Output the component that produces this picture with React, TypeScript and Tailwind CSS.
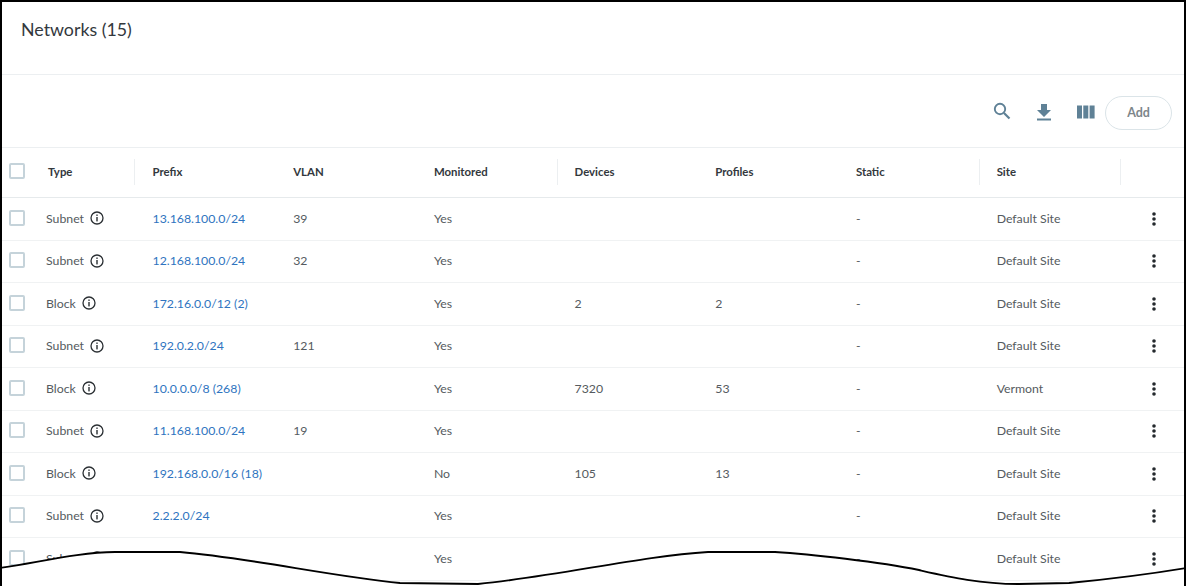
const rows = [
  ["Subnet", "13.168.100.0/24", "39", "Yes", "", "", "-", "Default Site"],
  ["Subnet", "12.168.100.0/24", "32", "Yes", "", "", "-", "Default Site"],
  ["Block", "172.16.0.0/12 (2)", "", "Yes", "2", "2", "-", "Default Site"],
  ["Subnet", "192.0.2.0/24", "121", "Yes", "", "", "-", "Default Site"],
  ["Block", "10.0.0.0/8 (268)", "", "Yes", "7320", "53", "-", "Vermont"],
  ["Subnet", "11.168.100.0/24", "19", "Yes", "", "", "-", "Default Site"],
  ["Block", "192.168.0.0/16 (18)", "", "No", "105", "13", "-", "Default Site"],
  ["Subnet", "2.2.2.0/24", "", "Yes", "", "", "-", "Default Site"],
  ["Subnet", "", "", "Yes", "", "", "-", "Default Site"],
];

const headers = [
  { t: "Prefix", sep: false },
  { t: "VLAN", sep: false },
  { t: "Monitored", sep: false },
  { t: "Devices", sep: true },
  { t: "Profiles", sep: false },
  { t: "Static", sep: false },
  { t: "Site", sep: true },
];

const cols = "grid grid-cols-[134px_repeat(7,140.7px)_1fr]";

function Box() {
  return <span className="block w-[16px] h-[16px] -mt-[2px] border-2 border-[#c5d3da] rounded-[2px] bg-white" />;
}

function Info() {
  return (
    <svg width="14" height="14" viewBox="0 0 14 14" fill="none" className="shrink-0 -mt-[1px]">
      <circle cx="7" cy="7" r="6" stroke="#2a2f33" strokeWidth="1.3" />
      <rect x="6.3" y="6" width="1.4" height="4.4" fill="#2a2f33" />
      <rect x="6.3" y="3.5" width="1.4" height="1.4" fill="#2a2f33" />
    </svg>
  );
}

function Dots() {
  return (
    <svg width="4" height="14" viewBox="0 0 4 14" fill="#24292d">
      <circle cx="2" cy="2" r="1.8" />
      <circle cx="2" cy="7" r="1.8" />
      <circle cx="2" cy="12" r="1.8" />
    </svg>
  );
}

const wave =
  "M0 568 C40 562 80 552 115 552 L180 552 C250 558 330 576 400 583 L478 584 C560 576 640 556 708 552 L775 552 C810 554 880 562 919 570 C950 577 980 584 1019 584 L1069 583 C1100 580 1150 574 1186 568";

export default function App() {
  return (
    <div className="relative w-[1186px] h-[586px] overflow-hidden bg-white border-t-2 border-x-2 border-black font-['Lato',sans-serif] text-[12.3px] text-[#555b60]">
      <div className="h-[73px] border-b border-[#eceff1] pl-[19px] pt-[16px] text-[17.8px] leading-[22px] text-[#33383d]">
        Networks (15)
      </div>
      <div className="h-[73px] border-b border-[#eceff1] flex items-center justify-end pr-[12px] pt-[4px]">
        <svg width="18" height="18" viewBox="0 0 18 18" fill="none" className="mr-[25px] -mt-[4px] -ml-[1px]">
          <circle cx="7" cy="7" r="5.2" stroke="#5f8196" strokeWidth="1.9" />
          <path d="M11 11l5.5 5.5" stroke="#5f8196" strokeWidth="2.2" />
        </svg>
        <svg width="16" height="18" viewBox="0 0 16 18" fill="#5f8196" className="mr-[25px] -mt-[3px]">
          <path d="M5 1h6v6h4l-7 7-7-7h4z" />
          <rect x="1" y="15.5" width="14" height="2" />
        </svg>
        <svg width="18" height="14" viewBox="0 0 18 14" fill="#5f8196" className="mr-[10px] -mt-[3px]">
          <rect x="0" y="0.5" width="5" height="13" />
          <rect x="6.3" y="0.5" width="5" height="13" />
          <rect x="12.6" y="0.5" width="5" height="13" />
        </svg>
        <button className="w-[67px] h-[34px] rounded-[17px] border border-[#dbe4e8] bg-white text-[12.5px] text-[#7d858a] font-bold">
          Add
        </button>
      </div>
      <div className={`${cols} h-[50px] border-b border-[#e6eaec] items-center text-[#33383d] font-bold text-[11.4px] pb-[2px]`}>
        <div className="relative flex items-center h-full pl-[7px]">
          <Box />
          <span className="ml-[23px]">Type</span>
          <span className="absolute right-[1px] top-[11px] h-[26px] w-px bg-[#eceff1]" />
        </div>
        {headers.map((h) => (
          <div key={h.t} className="flex items-center h-full">
            {h.sep && <span className="h-[26px] w-px bg-[#eceff1] -ml-px" />}
            <span className="pl-[16.5px]">{h.t}</span>
          </div>
        ))}
        <div className="flex items-center h-full">
          <span className="h-[26px] w-px bg-[#eceff1] -ml-px" />
        </div>
      </div>
      {rows.map((r, i) => (
        <div key={i} className={`${cols} h-[42.5px] border-b border-[#f0f2f3] items-center`}>
          <div className="flex items-center pl-[7px]">
            <Box />
            <span className="ml-[21px]">{r[0]}</span>
            <span className="ml-[6px]"><Info /></span>
          </div>
          <div className="pl-[16.5px] text-[#2f74c0]">{r[1]}</div>
          {r.slice(2).map((c, j) => (
            <div key={j} className="pl-[16.5px]">{c}</div>
          ))}
          <div className="flex justify-end pr-[28px]"><Dots /></div>
        </div>
      ))}
      <svg
        width="1186"
        height="586"
        viewBox="0 0 1186 586"
        className="absolute left-[-2px] top-[-2px]"
      >
        <path d={`${wave} L1186 586 L0 586 Z`} fill="white" stroke="none" />
        <path d={wave} fill="none" stroke="black" strokeWidth="1.8" />
      </svg>
    </div>
  );
}
